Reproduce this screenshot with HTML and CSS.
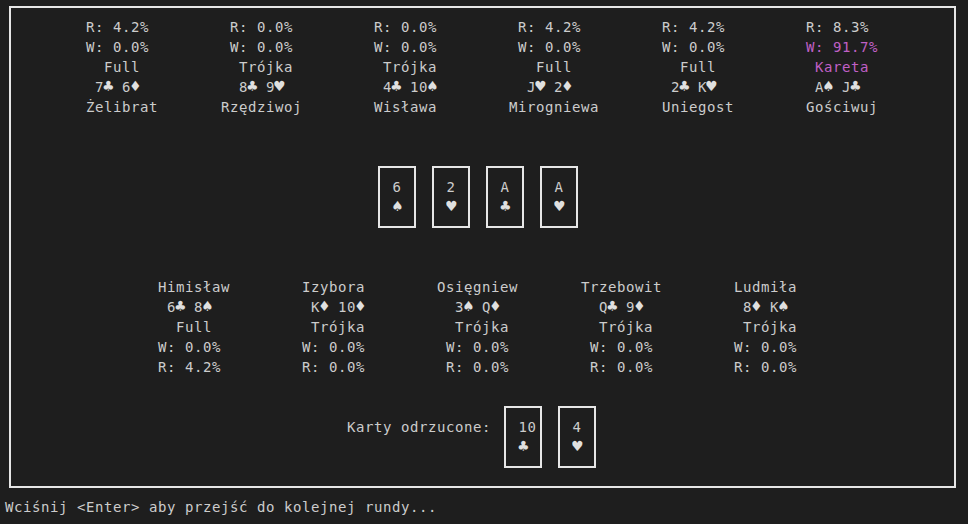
FILE: index.html
```html
<!DOCTYPE html>
<html lang="pl">
<head>
<meta charset="utf-8">
<title>Poker</title>
<link rel="stylesheet" href="styles.css">
</head>
<body>
<div class="term">
  <div class="frame">
    <div class="players top">
      <div class="field"><div class="ln"> R: 4.2%</div><div class="ln"> W: 0.0%</div><div class="ln">   Full</div><div class="ln">  7<span class="s">♣</span> 6<span class="s">♦</span></div><div class="ln"> Żelibrat</div></div>
      <div class="field"><div class="ln"> R: 0.0%</div><div class="ln"> W: 0.0%</div><div class="ln">  Trójka</div><div class="ln">  8<span class="s">♣</span> 9<span class="s">♥</span></div><div class="ln">Rzędziwoj</div></div>
      <div class="field"><div class="ln"> R: 0.0%</div><div class="ln"> W: 0.0%</div><div class="ln">  Trójka</div><div class="ln">  4<span class="s">♣</span> 10<span class="s">♠</span></div><div class="ln"> Wisława</div></div>
      <div class="field"><div class="ln"> R: 4.2%</div><div class="ln"> W: 0.0%</div><div class="ln">   Full</div><div class="ln">  J<span class="s">♥</span> 2<span class="s">♦</span></div><div class="ln">Mirogniewa</div></div>
      <div class="field"><div class="ln"> R: 4.2%</div><div class="ln"> W: 0.0%</div><div class="ln">   Full</div><div class="ln">  2<span class="s">♣</span> K<span class="s">♥</span></div><div class="ln"> Uniegost</div></div>
      <div class="field"><div class="ln"> R: 8.3%</div><div class="ln win"> W: 91.7%</div><div class="ln win">  Kareta</div><div class="ln">  A<span class="s">♠</span> J<span class="s">♣</span></div><div class="ln"> Gościwuj</div></div>
    </div>

    <div class="cards community">
      <div class="card"><div class="ln"> 6 </div><div class="ln"> <span class="s">♠</span> </div></div>
      <div class="card"><div class="ln"> 2 </div><div class="ln"> <span class="s">♥</span> </div></div>
      <div class="card"><div class="ln"> A </div><div class="ln"> <span class="s">♣</span> </div></div>
      <div class="card"><div class="ln"> A </div><div class="ln"> <span class="s">♥</span> </div></div>
    </div>

    <div class="players bottom">
      <div class="field"><div class="ln"> Himisław</div><div class="ln">  6<span class="s">♣</span> 8<span class="s">♠</span></div><div class="ln">   Full</div><div class="ln"> W: 0.0%</div><div class="ln"> R: 4.2%</div></div>
      <div class="field"><div class="ln"> Izybora</div><div class="ln">  K<span class="s">♦</span> 10<span class="s">♦</span></div><div class="ln">  Trójka</div><div class="ln"> W: 0.0%</div><div class="ln"> R: 0.0%</div></div>
      <div class="field"><div class="ln">Osięgniew</div><div class="ln">  3<span class="s">♠</span> Q<span class="s">♦</span></div><div class="ln">  Trójka</div><div class="ln"> W: 0.0%</div><div class="ln"> R: 0.0%</div></div>
      <div class="field"><div class="ln">Trzebowit</div><div class="ln">  Q<span class="s">♣</span> 9<span class="s">♦</span></div><div class="ln">  Trójka</div><div class="ln"> W: 0.0%</div><div class="ln"> R: 0.0%</div></div>
      <div class="field"><div class="ln"> Ludmiła</div><div class="ln">  8<span class="s">♦</span> K<span class="s">♠</span></div><div class="ln">  Trójka</div><div class="ln"> W: 0.0%</div><div class="ln"> R: 0.0%</div></div>
    </div>

    <div class="discard">
      <div class="label ln">Karty odrzucone:</div>
      <div class="cards">
        <div class="card"><div class="ln"> 10</div><div class="ln"> <span class="s">♣</span> </div></div>
        <div class="card"><div class="ln"> 4 </div><div class="ln"> <span class="s">♥</span> </div></div>
      </div>
    </div>
  </div>
  <div class="prompt ln">Wciśnij &lt;Enter&gt; aby przejść do kolejnej rundy...</div>
</div>
</body>
</html>
```

FILE: styles.css
```css
html, body {
  margin: 0;
  padding: 0;
  background: #1e1e1e;
}

body {
  width: 968px;
  height: 524px;
  overflow: hidden;
  color: #cccccc;
  font-family: "DejaVu Sans Mono", "Liberation Mono", monospace;
  font-size: 14px;
  letter-spacing: 0.57px;
  line-height: 20px;
}

.term {
  padding-top: 6px;
}

.ln {
  white-space: pre;
  height: 20px;
}

.s {
  display: inline-block;
  transform: scale(1.2);
  transform-origin: 45% 65%;
  color: #e0e0e0;
}

.frame {
  box-sizing: border-box;
  width: 947px;
  margin-left: 9px;
  border: 2px solid #e6e6e6;
  padding: 8.5px 0 18px 3px;
}

.players {
  display: flex;
  gap: 54px;
}

.players.top {
  padding-left: 63px;
}

.players.bottom {
  margin-top: 48.5px;
  padding-left: 135px;
}

.field {
  width: 90px;
  display: flex;
  flex-direction: column;
}

.win {
  color: #c060c6;
}

.cards {
  display: flex;
  gap: 16px;
}

.community {
  margin-top: 49.5px;
  padding-left: 364px;
}

.card {
  box-sizing: border-box;
  width: 38px;
  height: 62px;
  border: 2px solid #e6e6e6;
  padding-top: 8.5px;
  display: flex;
  flex-direction: column;
  align-items: center;
}

.card .ln {
  width: 27px;
}

.discard {
  margin-top: 29.5px;
  padding-left: 333px;
  display: flex;
  align-items: flex-start;
}

.discard .label {
  margin-top: 10.5px;
  width: 157px;
}

.prompt {
  margin-top: 8.5px;
  padding-left: 5px;
}
```
